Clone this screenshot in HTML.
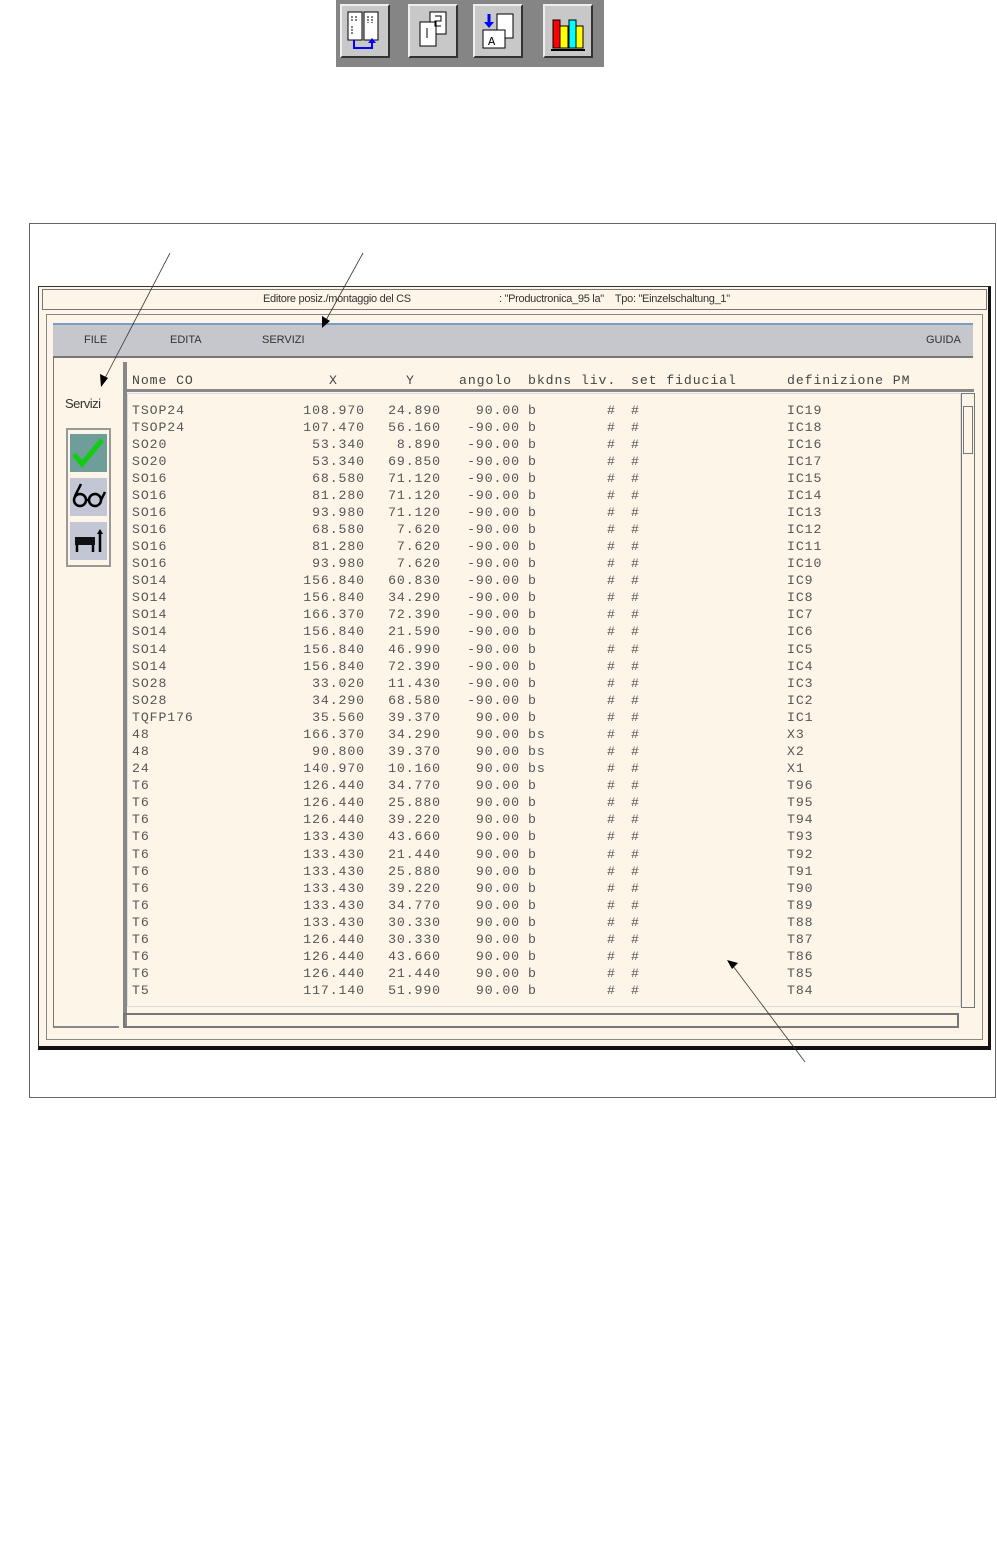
<!DOCTYPE html>
<html><head><meta charset="utf-8"><style>
body{margin:0;width:997px;height:1560px;background:#fff;position:relative;overflow:hidden;font-family:"Liberation Sans",sans-serif}
.a{position:absolute}
.tb{left:336px;top:0;width:268px;height:67px;background:#858585}
.btn{position:absolute;top:4px;width:50px;height:54px;background:#c8c8c8;border:2px solid;border-color:#eee #333 #333 #eee;box-sizing:border-box}
.mono{font-family:"Liberation Mono",monospace;font-size:13.2px;letter-spacing:0.9px;color:#555}
.r{position:absolute;left:0;width:997px;height:17px;line-height:17px}
.r span{position:absolute;white-space:pre}
.c1{left:132px}.c2{right:632px}.c3{right:556px}.c4{right:477px}.c5{left:528px}.c6{left:607px}.c7{left:631px}.c8{left:787px}
</style></head><body>
<div class="a tb">
<div class="btn" style="left:4px"><svg width="46" height="50"><rect x="6" y="6" width="14" height="28" fill="#fff" stroke="#000"/><rect x="22" y="6" width="14" height="28" fill="#fff" stroke="#000"/><path d="M10 10v6M14 10v6M10 20v8M26 10v7M30 10v7" stroke="#000" stroke-dasharray="2 1"/><path d="M12 34v8h18v-6" stroke="#00f" stroke-width="2" fill="none"/><path d="M26 37l4-5 4 5z" fill="#00f"/></svg></div>
<div class="btn" style="left:72px"><svg width="46" height="50"><rect x="20" y="6" width="16" height="22" fill="#fff" stroke="#000"/><rect x="10" y="16" width="16" height="24" fill="#fff" stroke="#000"/><path d="M17 22v10M25 10h6v5h-6v5h6" stroke="#000" fill="none"/></svg></div>
<div class="btn" style="left:137px"><svg width="46" height="50"><rect x="22" y="8" width="16" height="24" fill="#fff" stroke="#000"/><rect x="8" y="24" width="22" height="18" fill="#fff" stroke="#000"/><text x="13" y="39" font-size="12" font-family="Liberation Mono">A</text><path d="M14 8v10" stroke="#00f" stroke-width="3"/><path d="M9 16l5 6 5-6z" fill="#00f"/></svg></div>
<div class="btn" style="left:207px"><svg width="46" height="50"><rect x="8" y="14" width="7" height="28" fill="#f00" stroke="#000"/><rect x="15" y="20" width="8" height="22" fill="#ff0" stroke="#000"/><rect x="24" y="14" width="7" height="28" fill="#0ff" stroke="#000"/><rect x="31" y="20" width="7" height="22" fill="#ff0" stroke="#000"/><path d="M6 44h34" stroke="#000" stroke-width="2"/></svg></div>
</div>
<div class="a" style="left:29px;top:223px;width:967px;height:875px;border:1px solid #666;box-sizing:border-box"></div>
<div class="a" style="left:38px;top:286px;width:953px;height:764px;background:#fdf6e8;border:1px solid #333;border-right:3px solid #111;border-bottom:4px solid #111;box-sizing:border-box"></div>
<div class="a" style="left:42px;top:289px;width:945px;height:21px;border:1px solid #777;box-sizing:border-box;font-size:11px;color:#333;line-height:19px">
<span class="a" style="left:220px;letter-spacing:-0.3px">Editore posiz./montaggio del CS</span><span class="a" style="left:456px;letter-spacing:-0.3px">: "Productronica_95 la"&nbsp;&nbsp;&nbsp;&nbsp;Tpo: "Einzelschaltung_1"</span></div>
<div class="a" style="left:46px;top:314px;width:937px;height:726px;border:1px solid #888;box-sizing:border-box"></div>
<div class="a" style="left:53px;top:323px;width:920px;height:35px;background:#c6c7cc;border-top:2px solid #7a9cc8;border-bottom:2px solid #777;box-sizing:border-box;font-size:11px;color:#333;line-height:31px">
<span class="a" style="left:31px">FILE</span><span class="a" style="left:117px">EDITA</span><span class="a" style="left:209px">SERVIZI</span><span class="a" style="left:873px">GUIDA</span></div>
<div class="a" style="left:53px;top:358px;width:66px;height:670px;border-left:1px solid #777;border-bottom:2px solid #888;box-sizing:border-box"></div>
<div class="a" style="left:65px;top:396px;font-size:13px;color:#333;letter-spacing:-0.5px">Servizi</div>
<div class="a" style="left:66px;top:428px;width:45px;height:139px;border:2px solid #999;box-sizing:border-box;background:#fdf6e8"></div>
<div class="a" style="left:70px;top:434px;width:37px;height:38px;background:#6f9e9a"><svg width="37" height="38"><path d="M4 20l8 10L32 6" stroke="#1c1" stroke-width="5" fill="none"/></svg></div>
<div class="a" style="left:70px;top:478px;width:37px;height:38px;background:#c3c6d4"><svg width="37" height="38"><circle cx="10" cy="22" r="6" stroke="#000" stroke-width="2.5" fill="none"/><circle cx="25" cy="22" r="6" stroke="#000" stroke-width="2.5" fill="none"/><path d="M16 22h3M31 22l4-8M5 18l6-12" stroke="#000" stroke-width="2.5" fill="none"/></svg></div>
<div class="a" style="left:70px;top:522px;width:37px;height:38px;background:#c3c6d4"><svg width="37" height="38"><rect x="5" y="15" width="20" height="8" fill="#111"/><path d="M7 23v7M23 23v7M30 30V10" stroke="#000" stroke-width="2.5"/><path d="M27 12l3-5 3 5z" fill="#000"/></svg></div>
<div class="a" style="left:123px;top:362px;width:4px;height:666px;background:#888"></div>
<div class="a" style="left:123px;top:389px;width:851px;height:3px;background:#888"></div>
<div class="a" style="left:127px;top:393px;width:834px;height:614px;border:1px solid #ddd;box-sizing:border-box"></div>
<div class="a" style="left:961px;top:393px;width:14px;height:615px;border:1px solid #777;box-sizing:border-box"></div>
<div class="a" style="left:963px;top:406px;width:10px;height:48px;border:1px solid #777;box-sizing:border-box"></div>
<div class="a" style="left:123px;top:1013px;width:836px;height:15px;border:2px solid #777;box-sizing:border-box"></div>
<div class="mono">
<div class="r" style="top:372px;color:#444"><span class="c1">Nome CO</span><span style="left:329px">X</span><span style="left:406px">Y</span><span style="left:459px">angolo</span><span style="left:528px">bkdns liv.</span><span style="left:631px">set fiducial</span><span class="c8">definizione PM</span></div>
<div class="r" style="top:402px"><span class="c1">TSOP24</span><span class="c2">108.970</span><span class="c3">24.890</span><span class="c4">90.00</span><span class="c5">b</span><span class="c6">#</span><span class="c7">#</span><span class="c8">IC19</span></div>
<div class="r" style="top:419px"><span class="c1">TSOP24</span><span class="c2">107.470</span><span class="c3">56.160</span><span class="c4">-90.00</span><span class="c5">b</span><span class="c6">#</span><span class="c7">#</span><span class="c8">IC18</span></div>
<div class="r" style="top:436px"><span class="c1">SO20</span><span class="c2">53.340</span><span class="c3">8.890</span><span class="c4">-90.00</span><span class="c5">b</span><span class="c6">#</span><span class="c7">#</span><span class="c8">IC16</span></div>
<div class="r" style="top:453px"><span class="c1">SO20</span><span class="c2">53.340</span><span class="c3">69.850</span><span class="c4">-90.00</span><span class="c5">b</span><span class="c6">#</span><span class="c7">#</span><span class="c8">IC17</span></div>
<div class="r" style="top:470px"><span class="c1">SO16</span><span class="c2">68.580</span><span class="c3">71.120</span><span class="c4">-90.00</span><span class="c5">b</span><span class="c6">#</span><span class="c7">#</span><span class="c8">IC15</span></div>
<div class="r" style="top:487px"><span class="c1">SO16</span><span class="c2">81.280</span><span class="c3">71.120</span><span class="c4">-90.00</span><span class="c5">b</span><span class="c6">#</span><span class="c7">#</span><span class="c8">IC14</span></div>
<div class="r" style="top:504px"><span class="c1">SO16</span><span class="c2">93.980</span><span class="c3">71.120</span><span class="c4">-90.00</span><span class="c5">b</span><span class="c6">#</span><span class="c7">#</span><span class="c8">IC13</span></div>
<div class="r" style="top:521px"><span class="c1">SO16</span><span class="c2">68.580</span><span class="c3">7.620</span><span class="c4">-90.00</span><span class="c5">b</span><span class="c6">#</span><span class="c7">#</span><span class="c8">IC12</span></div>
<div class="r" style="top:538px"><span class="c1">SO16</span><span class="c2">81.280</span><span class="c3">7.620</span><span class="c4">-90.00</span><span class="c5">b</span><span class="c6">#</span><span class="c7">#</span><span class="c8">IC11</span></div>
<div class="r" style="top:555px"><span class="c1">SO16</span><span class="c2">93.980</span><span class="c3">7.620</span><span class="c4">-90.00</span><span class="c5">b</span><span class="c6">#</span><span class="c7">#</span><span class="c8">IC10</span></div>
<div class="r" style="top:572px"><span class="c1">SO14</span><span class="c2">156.840</span><span class="c3">60.830</span><span class="c4">-90.00</span><span class="c5">b</span><span class="c6">#</span><span class="c7">#</span><span class="c8">IC9</span></div>
<div class="r" style="top:589px"><span class="c1">SO14</span><span class="c2">156.840</span><span class="c3">34.290</span><span class="c4">-90.00</span><span class="c5">b</span><span class="c6">#</span><span class="c7">#</span><span class="c8">IC8</span></div>
<div class="r" style="top:606px"><span class="c1">SO14</span><span class="c2">166.370</span><span class="c3">72.390</span><span class="c4">-90.00</span><span class="c5">b</span><span class="c6">#</span><span class="c7">#</span><span class="c8">IC7</span></div>
<div class="r" style="top:623px"><span class="c1">SO14</span><span class="c2">156.840</span><span class="c3">21.590</span><span class="c4">-90.00</span><span class="c5">b</span><span class="c6">#</span><span class="c7">#</span><span class="c8">IC6</span></div>
<div class="r" style="top:641px"><span class="c1">SO14</span><span class="c2">156.840</span><span class="c3">46.990</span><span class="c4">-90.00</span><span class="c5">b</span><span class="c6">#</span><span class="c7">#</span><span class="c8">IC5</span></div>
<div class="r" style="top:658px"><span class="c1">SO14</span><span class="c2">156.840</span><span class="c3">72.390</span><span class="c4">-90.00</span><span class="c5">b</span><span class="c6">#</span><span class="c7">#</span><span class="c8">IC4</span></div>
<div class="r" style="top:675px"><span class="c1">SO28</span><span class="c2">33.020</span><span class="c3">11.430</span><span class="c4">-90.00</span><span class="c5">b</span><span class="c6">#</span><span class="c7">#</span><span class="c8">IC3</span></div>
<div class="r" style="top:692px"><span class="c1">SO28</span><span class="c2">34.290</span><span class="c3">68.580</span><span class="c4">-90.00</span><span class="c5">b</span><span class="c6">#</span><span class="c7">#</span><span class="c8">IC2</span></div>
<div class="r" style="top:709px"><span class="c1">TQFP176</span><span class="c2">35.560</span><span class="c3">39.370</span><span class="c4">90.00</span><span class="c5">b</span><span class="c6">#</span><span class="c7">#</span><span class="c8">IC1</span></div>
<div class="r" style="top:726px"><span class="c1">48</span><span class="c2">166.370</span><span class="c3">34.290</span><span class="c4">90.00</span><span class="c5">bs</span><span class="c6">#</span><span class="c7">#</span><span class="c8">X3</span></div>
<div class="r" style="top:743px"><span class="c1">48</span><span class="c2">90.800</span><span class="c3">39.370</span><span class="c4">90.00</span><span class="c5">bs</span><span class="c6">#</span><span class="c7">#</span><span class="c8">X2</span></div>
<div class="r" style="top:760px"><span class="c1">24</span><span class="c2">140.970</span><span class="c3">10.160</span><span class="c4">90.00</span><span class="c5">bs</span><span class="c6">#</span><span class="c7">#</span><span class="c8">X1</span></div>
<div class="r" style="top:777px"><span class="c1">T6</span><span class="c2">126.440</span><span class="c3">34.770</span><span class="c4">90.00</span><span class="c5">b</span><span class="c6">#</span><span class="c7">#</span><span class="c8">T96</span></div>
<div class="r" style="top:794px"><span class="c1">T6</span><span class="c2">126.440</span><span class="c3">25.880</span><span class="c4">90.00</span><span class="c5">b</span><span class="c6">#</span><span class="c7">#</span><span class="c8">T95</span></div>
<div class="r" style="top:811px"><span class="c1">T6</span><span class="c2">126.440</span><span class="c3">39.220</span><span class="c4">90.00</span><span class="c5">b</span><span class="c6">#</span><span class="c7">#</span><span class="c8">T94</span></div>
<div class="r" style="top:828px"><span class="c1">T6</span><span class="c2">133.430</span><span class="c3">43.660</span><span class="c4">90.00</span><span class="c5">b</span><span class="c6">#</span><span class="c7">#</span><span class="c8">T93</span></div>
<div class="r" style="top:846px"><span class="c1">T6</span><span class="c2">133.430</span><span class="c3">21.440</span><span class="c4">90.00</span><span class="c5">b</span><span class="c6">#</span><span class="c7">#</span><span class="c8">T92</span></div>
<div class="r" style="top:863px"><span class="c1">T6</span><span class="c2">133.430</span><span class="c3">25.880</span><span class="c4">90.00</span><span class="c5">b</span><span class="c6">#</span><span class="c7">#</span><span class="c8">T91</span></div>
<div class="r" style="top:880px"><span class="c1">T6</span><span class="c2">133.430</span><span class="c3">39.220</span><span class="c4">90.00</span><span class="c5">b</span><span class="c6">#</span><span class="c7">#</span><span class="c8">T90</span></div>
<div class="r" style="top:897px"><span class="c1">T6</span><span class="c2">133.430</span><span class="c3">34.770</span><span class="c4">90.00</span><span class="c5">b</span><span class="c6">#</span><span class="c7">#</span><span class="c8">T89</span></div>
<div class="r" style="top:914px"><span class="c1">T6</span><span class="c2">133.430</span><span class="c3">30.330</span><span class="c4">90.00</span><span class="c5">b</span><span class="c6">#</span><span class="c7">#</span><span class="c8">T88</span></div>
<div class="r" style="top:931px"><span class="c1">T6</span><span class="c2">126.440</span><span class="c3">30.330</span><span class="c4">90.00</span><span class="c5">b</span><span class="c6">#</span><span class="c7">#</span><span class="c8">T87</span></div>
<div class="r" style="top:948px"><span class="c1">T6</span><span class="c2">126.440</span><span class="c3">43.660</span><span class="c4">90.00</span><span class="c5">b</span><span class="c6">#</span><span class="c7">#</span><span class="c8">T86</span></div>
<div class="r" style="top:965px"><span class="c1">T6</span><span class="c2">126.440</span><span class="c3">21.440</span><span class="c4">90.00</span><span class="c5">b</span><span class="c6">#</span><span class="c7">#</span><span class="c8">T85</span></div>
<div class="r" style="top:982px"><span class="c1">T5</span><span class="c2">117.140</span><span class="c3">51.990</span><span class="c4">90.00</span><span class="c5">b</span><span class="c6">#</span><span class="c7">#</span><span class="c8">T84</span></div>
</div>
<svg class="a" style="left:0;top:0" width="997" height="1100">
<path d="M170 253L104 380M363 253L325 322M805 1062L733 966" stroke="#333" stroke-width="0.8" fill="none"/>
<path d="M101 387l-1-13 8 4z" fill="#000"/>
<path d="M322 328l0-12 8 5z" fill="#000"/>
<path d="M727 960l11 3-6 6z" fill="#000"/>
</svg>
</body></html>
